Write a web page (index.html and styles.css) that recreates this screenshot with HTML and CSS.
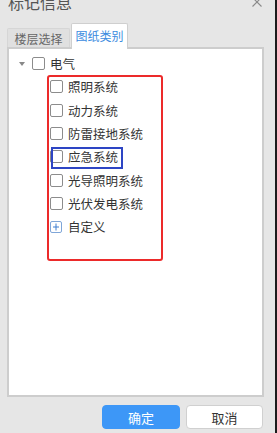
FILE: index.html
```html
<!DOCTYPE html>
<html lang="zh-CN">
<head>
    <meta charset="UTF-8">
    <meta name="viewport" content="width=device-width, initial-scale=1.0">
    <title>标记信息</title>
    <link rel="stylesheet" href="styles.css">
</head>
<body>
    <div class="title-bar">
        <span class="title">标记信息</span>
        <svg class="close" width="10" height="10" viewBox="0 0 10 10">
            <path d="M0.5 0.5 L9.5 9.5 M9.5 0.5 L0.5 9.5" stroke="#8a8a8a" stroke-width="1.1" fill="none"/>
        </svg>
    </div>

    <div class="tabs">
        <div class="tab">楼层选择</div>
        <div class="tab active">图纸类别</div>
    </div>

    <div class="panel">
        <div class="row root">
            <span class="caret"></span>
            <span class="check"></span>
            <span class="label">电气</span>
        </div>
        <div class="children">
            <div class="row"><span class="check"></span><span class="label">照明系统</span></div>
            <div class="row"><span class="check"></span><span class="label">动力系统</span></div>
            <div class="row"><span class="check"></span><span class="label">防雷接地系统</span></div>
            <div class="row"><span class="check"></span><span class="label">应急系统</span></div>
            <div class="row"><span class="check"></span><span class="label">光导照明系统</span></div>
            <div class="row"><span class="check"></span><span class="label">光伏发电系统</span></div>
            <div class="row">
                <svg class="plus" width="12" height="12" viewBox="0 0 12 12">
                    <rect x="0.5" y="0.5" width="11" height="11" rx="1.5" fill="#fff" stroke="#7fa6d8"/>
                    <path d="M3 6 H9 M6 2.5 V9.5" stroke="#3f7fd0" stroke-width="1"/>
                </svg>
                <span class="label">自定义</span>
            </div>
        </div>

        <span class="mark mark-red"></span>
        <span class="mark mark-blue"></span>
    </div>

    <div class="footer">
        <button class="btn btn-primary">确定</button>
        <button class="btn">取消</button>
    </div>
</body>
</html>
```

FILE: styles.css
```css
html {
    background: #1c1c1c;
}
body {
    margin: 0;
    width: 275px;
    height: 433px;
    overflow: hidden;
    background: #e6e6e6;
    font-family: "Noto Sans CJK SC", "Noto Sans", sans-serif;
    font-size: 12px;
    color: #333;
}
.title-bar {
    display: flex;
    justify-content: space-between;
    align-items: center;
    height: 16px;
    margin-top: -6px;
    padding: 0 13px 0 8px;
}
.title {
    font-size: 16px;
    line-height: 16px;
    color: #555;
}
.tabs {
    display: flex;
    align-items: flex-end;
    gap: 1px;
    height: 26px;
    margin-top: 13px;
    padding-left: 7px;
}
.tab {
    box-sizing: border-box;
    width: 63px;
    height: 21px;
    padding-top: 2px;
    text-align: center;
    background: #e0e0e0;
    border: 1px solid #d6d6d6;
    border-bottom: none;
    border-radius: 2px 2px 0 0;
    color: #666;
    line-height: 15px;
}
.tab.active {
    position: relative;
    z-index: 1;
    width: 57px;
    height: 26px;
    padding-top: 4px;
    background: #fff;
    border-color: #cfcfcf;
    color: #3b8be0;
}
.panel {
    position: relative;
    box-sizing: border-box;
    height: 350px;
    margin: -2px 11px 0 7px;
    padding-top: 3px;
    background: #fff;
    border: 2px solid #cdcdcd;
}
.row {
    display: flex;
    align-items: center;
    height: 23.3px;
}
.root {
    padding-left: 10px;
}
.caret {
    width: 0;
    height: 0;
    margin-right: 7px;
    border-left: 3px solid transparent;
    border-right: 3px solid transparent;
    border-top: 4px solid #888;
}
.check {
    box-sizing: border-box;
    width: 13px;
    height: 13px;
    border: 1px solid #8c8c8c;
    border-radius: 2px;
    background: #fff;
}
.plus {
    margin: 0 1px 0 0;
}
.label {
    margin-left: 5px;
    font-size: 12.5px;
}
.children {
    padding-left: 41px;
}
.mark {
    position: absolute;
    box-sizing: border-box;
}
.mark-red {
    left: 38px;
    top: 26px;
    width: 116px;
    height: 186px;
    border: 2px solid #ec2a2a;
    border-radius: 3px;
}
.mark-blue {
    left: 42px;
    top: 98px;
    width: 72px;
    height: 22px;
    border: 2px solid #2d45c4;
}
.footer {
    display: flex;
    justify-content: flex-end;
    gap: 6px;
    margin-top: 8px;
    padding-right: 12px;
}
.btn {
    width: 77px;
    height: 24px;
    padding: 0;
    font-family: inherit;
    font-size: 13px;
    color: #333;
    background: #fff;
    border: 1px solid #d0d0d0;
    border-radius: 4px;
}
.btn-primary {
    width: 78px;
    color: #fff;
    background: #3d97f7;
    border-color: #3d97f7;
}
```
